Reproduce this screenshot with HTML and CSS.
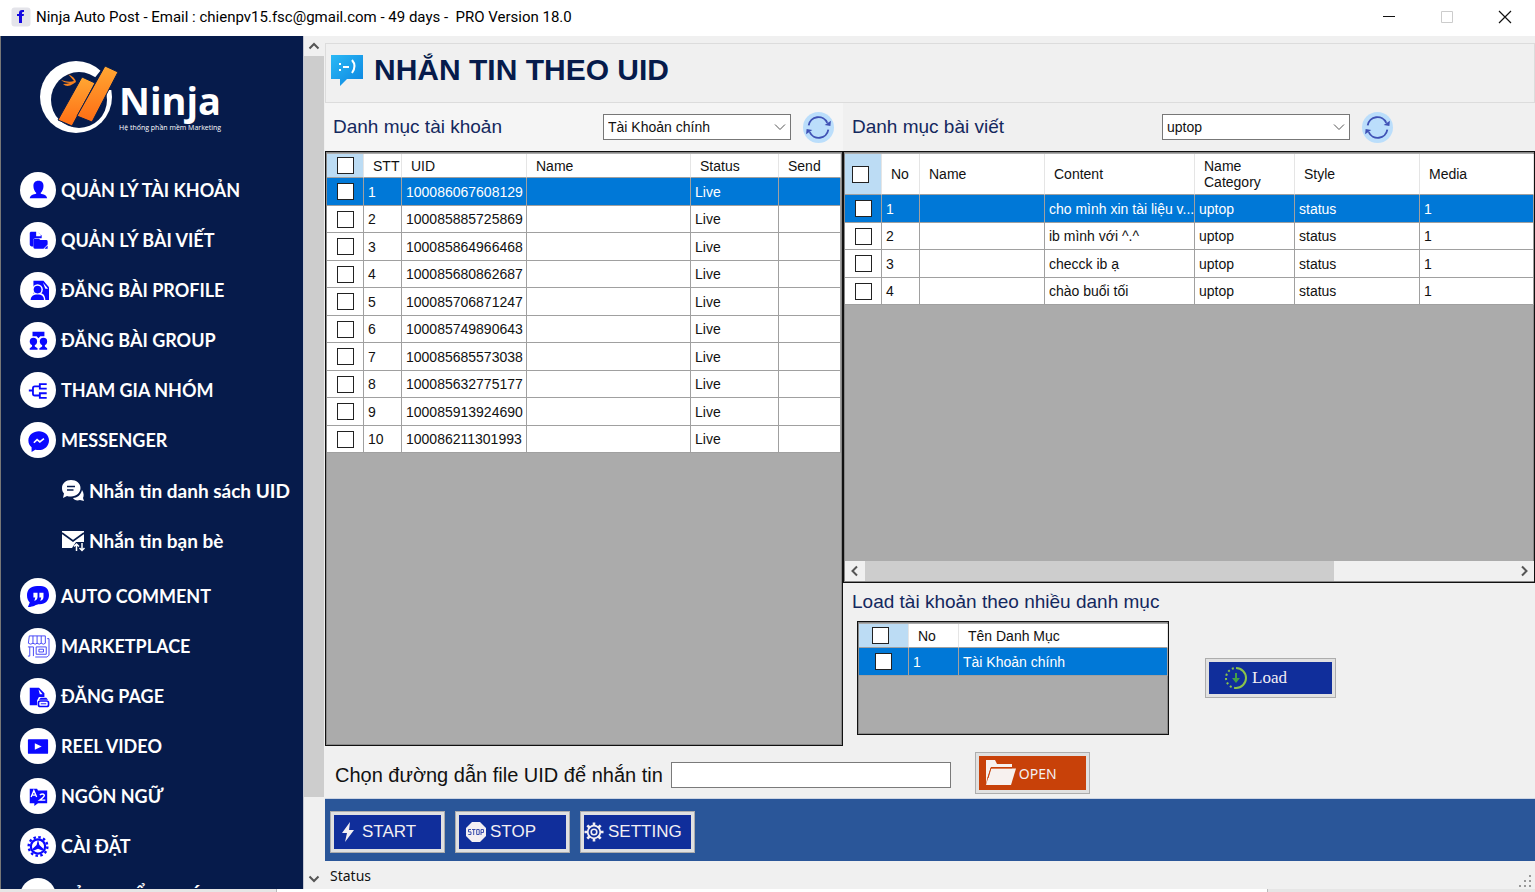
FILE: index.html
```html
<!DOCTYPE html>
<html lang="vi">
<head>
<meta charset="utf-8">
<title>Ninja Auto Post</title>
<link rel="stylesheet" href="styles.css">
</head>
<body>
<div class="window">
  <header class="titlebar">
    <svg class="app-icon" viewBox="0 0 20 20" aria-hidden="true"><rect x=".5" y=".5" width="19" height="19" rx="3" fill="#e4e4ea"/><path d="M8 16V9H6V7h2V6q0-3 3-3h2v2h-1q-1 0-1 1v1h2l-.4 2H11v7z" fill="#1508e0"/></svg>
    <span class="titlebar-text">Ninja Auto Post - Email : chienpv15.fsc@gmail.com - 49 days -&nbsp; PRO Version 18.0</span>
    <div class="window-controls">
      <button aria-label="Minimize"><svg viewBox="0 0 14 14"><path d="M1 6.500h12" stroke="#111" fill="none"/></svg></button>
      <button aria-label="Maximize" disabled><svg viewBox="0 0 14 14"><path d="M1.500 1.500h11v11h-11z" stroke="#ccc" fill="none"/></svg></button>
      <button aria-label="Close"><svg viewBox="0 0 14 14"><path d="M1 1l12 12M13 1L1 13" stroke="#111" stroke-width="1.200" fill="none"/></svg></button>
    </div>
  </header>

  <div class="body">
    <aside class="sidebar">
      <div class="logo">
        <svg class="logo-mark" viewBox="0 0 80 74" aria-hidden="true">
          <defs><linearGradient id="flame" x1="0" y1="0" x2="0" y2="1"><stop offset="0" stop-color="#ffa733"/><stop offset="1" stop-color="#ff6d14"/></linearGradient></defs>
          <circle cx="37" cy="37" r="36" fill="#fff"/>
          <ellipse cx="40" cy="40" rx="28" ry="28" fill="#061b4b"/>
          <path d="M62 10L67 3 82 13 73 30 66 30 54 20z" fill="#061b4b"/>
          <path d="M43 17L56 23 33 66 19 60Z" fill="url(#flame)" stroke="#061b4b"/>
          <path d="M66 6L79 12 53 62 38 56Z" fill="url(#flame)" stroke="#061b4b"/>
          <path d="M22 20q8 3 13 1l-6-7q7 3 8 8l-3 2q-6 4-10 0 4 0 7-1-6 0-9-3z" fill="#f58220"/>
        </svg>
        <div class="logo-words"><span class="logo-name">Ninja</span><span class="logo-tag">Hệ thống phần mềm Marketing</span></div>
      </div>
      <nav class="menu">
        <a class="item" href="#"><span class="disc"><svg viewBox="0 0 24 24"><path d="M12.500 2c3.900 0 5.500 2.500 5.500 5.500 0 3.500-1.500 6-3 7.500V16c3 .6 6.500 1.500 7 5H3c.5-3.500 4-4.400 7-5v-1c-1.500-1.500-3-4-3-7.500C7 4.500 8.600 2 12.500 2z"/></svg></span>QUẢN LÝ TÀI KHOẢN</a>
        <a class="item" href="#"><span class="disc"><svg viewBox="0 0 24 24"><path d="M4 3h6v5h5V6l-4-3 5 4v3H9l-2 1v8H5q-2 0-2-2V4z"/><path d="M10 10.500h3l1.500 1.500H21q1.500 0 1.500 1.500V17L18 21.500H8.500Q7 21.500 7 20v-8q0-1.500 1.500-1.500z"/><path d="M22.500 18v3.500H19z"/></svg></span>QUẢN LÝ BÀI VIẾT</a>
        <a class="item" href="#"><span class="disc"><svg viewBox="0 0 24 24"><path d="M7 2h11l6 7v14H7z"/><path d="M17.500 4l5.500 6.500h-3z" fill="#fff"/><circle cx="11.500" cy="11.500" r="5.800" fill="#fff"/><path d="M2 24c0-6 4-9 10-9s8 3 8 9z" fill="#fff"/><circle cx="11.500" cy="11.500" r="4.200"/><path d="M4 23c0-4 3-6 7.500-6s7 2 7 6z"/></svg></span>ĐĂNG BÀI PROFILE</a>
        <a class="item" href="#"><span class="disc"><svg viewBox="0 0 24 24"><path d="M6 3h13v5h-4.500l-2 2-2-2H6z"/><circle cx="7" cy="13.500" r="4"/><circle cx="18" cy="13.500" r="4"/><path d="M5.500 15h3v4l3 2v1.500H3V21l2.500-2zM16.500 15h3v4l2.500 2v1.500h-8.500V21l3-2z"/></svg></span>ĐĂNG BÀI GROUP</a>
        <a class="item" href="#"><span class="disc"><svg viewBox="0 0 24 24" class="lined"><path d="M2 12.500h4M14 8H8.500a2 2 0 0 0-2 2v6a2 2 0 0 0 2 2H14M21.500 5.500H14v5h7.500M21.500 15.500H14v5h7.500"/></svg></span>THAM GIA NHÓM</a>
        <a class="item" href="#"><span class="disc"><svg viewBox="0 0 24 24"><path d="M13 2.500c6 0 11 4 11 10S19 23 13 23c-2 0-3-.5-4-.5L5 25v-5c-2-2-3.500-4-3.500-7.500C1.500 6.500 7 2.500 13 2.500z"/><path d="M7.500 15l3.500-3.500 3 2.500 4.500-3.500" stroke="#fff" stroke-width="1.800" fill="none"/></svg></span>MESSENGER</a>
        <div class="submenu">
          <a class="item" href="#"><svg class="sub-icon" viewBox="0 0 24 24" aria-hidden="true"><path d="M10 2c5.500 0 9.500 3.500 9.500 8s-4 8.500-9.500 8.500c-1.500 0-3 0-4-.5L2 20l1-4.500C1.500 14 1 12 1 10c0-4.500 4-8 9-8z" fill="#fff"/><path d="M6 8.500h8M6 12h6.500" stroke="#061b4b" stroke-width="1.600"/><path d="M21 12c2 3 2 6 1 8l1 3-4-1c-3 1-6 0-7-2 4 0 8-3 9-8z" fill="#fff"/></svg>Nhắn tin danh sách UID</a>
          <a class="item" href="#"><svg class="sub-icon" viewBox="0 0 24 24" aria-hidden="true"><path d="M1 3h22v11h-8l-4 6H1z" fill="#fff"/><path d="M1 5l11 8 11-8" fill="none" stroke="#061b4b" stroke-width="1.600"/><path d="M15.500 23v-7M13 18.500l2.500-2.500 2.500 2.500M21 15v7M18.500 20l2.500 2.500 2.500-2.500" fill="none" stroke="#fff" stroke-width="1.500"/></svg>Nhắn tin bạn bè</a>
        </div>
        <a class="item" href="#"><span class="disc"><svg viewBox="0 0 24 24"><path d="M11 1h4c6 0 9 4 9 10s-4 10-10 10c-5 0-6 3-13 3l2-5C1 17 0 15 0 11 0 5 4 1 11 1z"/><path d="M7 8.500h4.500V13q0 3-3.500 4.500l1-4H7zM13.500 8.500H18V13q0 3-3.500 4.500l1-4h-2z" fill="#fff"/></svg></span>AUTO COMMENT</a>
        <a class="item" href="#"><span class="disc"><svg viewBox="0 0 24 24" class="thin"><path d="M2.500 1H20v8q-2 2-4.500 0-2 2-4.500 0-2 2-4.500 0Q4 11 1.500 9zM6.500 1v8M11 1v8M15.500 1v8M1 13h6v10M3 13v10H1M10 13h11v8H10zM13 15.500h5v3h-5zM22 4h2v18l-2 2H9"/></svg></span>MARKETPLACE</a>
        <a class="item" href="#"><span class="disc"><svg viewBox="0 0 24 24"><path d="M3 3h10l6 6v4h-6l-2 4v5H3z"/><path d="M12.500 4.500l4.500 5.500h-3z" fill="#fff"/><path d="M15 14h6l2 2H13z"/><rect x="12.500" y="17.500" width="11" height="6" rx="2" fill="#fff" stroke="#0a09ff" stroke-width="1.800"/><path d="M15 20.500h6" stroke="#0a09ff"/></svg></span>ĐĂNG PAGE</a>
        <a class="item" href="#"><span class="disc"><svg viewBox="0 0 24 24"><rect x="1" y="4.500" width="22" height="16" rx="1"/><path d="M8.500 9l7.500 3.500-7.500 3.500z" fill="#fff"/></svg></span>REEL VIDEO</a>
        <a class="item" href="#"><span class="disc"><svg viewBox="0 0 24 24"><path d="M3 4h8l1 2h10v14H12l-4 3v-3H3z"/><path d="M4.500 13l3-7 3 7M5.500 11h4M14 11q3-2.500 5 0 0 2-5 5.500h6" stroke="#fff" stroke-width="1.500" fill="none"/></svg></span>NGÔN NGỮ</a>
        <a class="item" href="#"><span class="disc"><svg viewBox="0 0 24 24"><circle cx="12" cy="12.500" r="10.200" fill="none" stroke="#0a09ff" stroke-width="2.600" stroke-dasharray="2.700 2.641"/><circle cx="12" cy="12.500" r="7.800" fill="none" stroke="#0a09ff" stroke-width="2.400"/><path d="M12 5l1.500 6 5 4.500-2 1.500-4.500-2-4.500 2-2-1.500 5-4.500z"/></svg></span>CÀI ĐẶT</a>
        <a class="item" href="#"><span class="disc"></span>BẢNG KIỂM TOÁN</a>
      </nav>
    </aside>

    <div class="vscroll" aria-hidden="true">
      <span class="arrow"><svg viewBox="0 0 12 12"><path d="M1.500 8.500L6 4l4.500 4.500"/></svg></span>
      <span class="thumb"></span><span class="rest"></span>
      <span class="arrow"><svg viewBox="0 0 12 12"><path d="M1.500 3.500L6 8l4.500-4.500"/></svg></span>
    </div>

    <main class="main">
      <div class="page-head">
        <svg class="page-icon" viewBox="0 0 32 32" aria-hidden="true"><defs><linearGradient id="sky" x1="0" y1="0" x2="1" y2="1"><stop offset="0" stop-color="#2bb9f5"/><stop offset="1" stop-color="#0b84e0"/></linearGradient></defs><path d="M0 1h32v24H16l-7 7v-7H0z" fill="url(#sky)"/><path d="M8 9h2v2H8zM8 15h2v2H8zM12 12h6v2h-6z" fill="#fff"/><path d="M21 6q5 6 0 13" fill="none" stroke="#fff" stroke-width="2"/></svg>
        <h1>NHẮN TIN THEO UID</h1>
      </div>

      <div class="panels">
        <section class="panel accounts">
          <div class="filter">
            <label for="acc">Danh mục tài khoản</label>
            <span class="combo"><select id="acc"><option>Tài Khoản chính</option></select><svg viewBox="0 0 12 12"><path d="M1 3.500l5 5 5-5"/></svg></span>
            <button class="refresh" aria-label="Tải lại tài khoản"><svg viewBox="0 0 30 30"><circle cx="15" cy="15" r="15" fill="#bbdefb"/><path d="M5.500 13a9.500 9.500 0 0 1 18-2.500M24.500 17a9.500 9.500 0 0 1-18 2.500" fill="none" stroke="#3f51b5" stroke-width="1.800"/><path d="M21 12.500l5.500 1 .5-5zM9 17.500l-5.500-1-.5 5z" fill="#3f51b5"/></svg></button>
          </div>
          <div class="gridbox">
            <table class="grid">
              <colgroup><col class="c-check"><col class="c-no"><col class="c-wide"><col><col class="c-status"><col class="c-send"></colgroup>
              <thead><tr><th class="pick"><input type="checkbox" aria-label="Chọn tất cả"></th><th>STT</th><th>UID</th><th>Name</th><th>Status</th><th>Send</th></tr></thead>
              <tbody>
                <tr class="on"><td class="pick"><input type="checkbox" aria-label="1"></td><td>1</td><td>100086067608129</td><td></td><td>Live</td><td></td></tr>
                <tr><td class="pick"><input type="checkbox" aria-label="2"></td><td>2</td><td>100085885725869</td><td></td><td>Live</td><td></td></tr>
                <tr><td class="pick"><input type="checkbox" aria-label="3"></td><td>3</td><td>100085864966468</td><td></td><td>Live</td><td></td></tr>
                <tr><td class="pick"><input type="checkbox" aria-label="4"></td><td>4</td><td>100085680862687</td><td></td><td>Live</td><td></td></tr>
                <tr><td class="pick"><input type="checkbox" aria-label="5"></td><td>5</td><td>100085706871247</td><td></td><td>Live</td><td></td></tr>
                <tr><td class="pick"><input type="checkbox" aria-label="6"></td><td>6</td><td>100085749890643</td><td></td><td>Live</td><td></td></tr>
                <tr><td class="pick"><input type="checkbox" aria-label="7"></td><td>7</td><td>100085685573038</td><td></td><td>Live</td><td></td></tr>
                <tr><td class="pick"><input type="checkbox" aria-label="8"></td><td>8</td><td>100085632775177</td><td></td><td>Live</td><td></td></tr>
                <tr><td class="pick"><input type="checkbox" aria-label="9"></td><td>9</td><td>100085913924690</td><td></td><td>Live</td><td></td></tr>
                <tr><td class="pick"><input type="checkbox" aria-label="10"></td><td>10</td><td>100086211301993</td><td></td><td>Live</td><td></td></tr>
              </tbody>
            </table>
          </div>
        </section>

        <section class="panel posts">
          <div class="filter">
            <label for="post">Danh mục bài viết</label>
            <span class="combo"><select id="post"><option>uptop</option></select><svg viewBox="0 0 12 12"><path d="M1 3.500l5 5 5-5"/></svg></span>
            <button class="refresh" aria-label="Tải lại bài viết"><svg viewBox="0 0 30 30"><circle cx="15" cy="15" r="15" fill="#bbdefb"/><path d="M5.500 13a9.500 9.500 0 0 1 18-2.500M24.500 17a9.500 9.500 0 0 1-18 2.500" fill="none" stroke="#3f51b5" stroke-width="1.800"/><path d="M21 12.500l5.500 1 .5-5zM9 17.500l-5.500-1-.5 5z" fill="#3f51b5"/></svg></button>
          </div>
          <div class="gridbox">
            <table class="grid tall">
              <colgroup><col class="c-check"><col class="c-no"><col class="c-wide"><col class="c-content"><col class="c-cat"><col class="c-wide"><col></colgroup>
              <thead><tr><th class="pick lead"><input type="checkbox" aria-label="Chọn tất cả bài viết"></th><th>No</th><th>Name</th><th>Content</th><th>Name Category</th><th>Style</th><th>Media</th></tr></thead>
              <tbody>
                <tr class="on"><td class="pick"><input type="checkbox" aria-label="1"></td><td>1</td><td></td><td>cho mình xin tài liệu v...</td><td>uptop</td><td>status</td><td>1</td></tr>
                <tr><td class="pick"><input type="checkbox" aria-label="2"></td><td>2</td><td></td><td>ib mình với ^.^</td><td>uptop</td><td>status</td><td>1</td></tr>
                <tr><td class="pick"><input type="checkbox" aria-label="3"></td><td>3</td><td></td><td>checck ib ạ</td><td>uptop</td><td>status</td><td>1</td></tr>
                <tr><td class="pick"><input type="checkbox" aria-label="4"></td><td>4</td><td></td><td>chào buổi tối</td><td>uptop</td><td>status</td><td>1</td></tr>
              </tbody>
            </table>
            <div class="hscroll" aria-hidden="true">
              <span class="arrow"><svg viewBox="0 0 12 12"><path d="M8 1.500L3.500 6 8 10.500"/></svg></span>
              <span class="thumb"></span><span class="rest"></span>
              <span class="arrow"><svg viewBox="0 0 12 12"><path d="M4 1.500L8.500 6 4 10.500"/></svg></span>
            </div>
          </div>
          <div class="loader">
            <h2>Load tài khoản theo nhiều danh mục</h2>
            <div class="loader-row">
              <div class="gridbox small">
                <table class="grid">
                  <colgroup><col class="c-half"><col class="c-half"><col></colgroup>
                  <thead><tr><th class="pick lead"><input type="checkbox" aria-label="Chọn tất cả danh mục"></th><th>No</th><th>Tên Danh Mục</th></tr></thead>
                  <tbody><tr class="on"><td class="pick"><input type="checkbox" aria-label="1"></td><td>1</td><td>Tài Khoản chính</td></tr></tbody>
                </table>
              </div>
              <button class="btn load"><svg viewBox="0 0 24 24" aria-hidden="true"><path d="M12 2a10 10 0 0 1 0 20" fill="none" stroke="#8bc34a" stroke-width="2"/><path d="M12 22A10 10 0 0 1 12 2" fill="none" stroke="#8bc34a" stroke-width="2" stroke-dasharray="2 2.500"/><path d="M11 7h2v5h3l-4 5-4-5h3z" fill="#43a047"/></svg>Load</button>
            </div>
          </div>
        </section>
      </div>

      <div class="file-row">
        <label for="path">Chọn đường dẫn file UID để nhắn tin</label>
        <input id="path" type="text">
        <button class="btn open"><svg viewBox="0 0 30 26" aria-hidden="true"><path d="M0 0h9l2 4h15v3H5L1 19l-1 6z" fill="#f7f1ef"/><path d="M5 8.500h25L25 25H0z" fill="#f7f1ef"/><path d="M2 18L5 7.800h21" fill="none" stroke="#c84109"/></svg>OPEN</button>
      </div>

      <div class="actions">
        <button class="btn start"><svg viewBox="0 0 20 20" aria-hidden="true"><path d="M12 0L4 11h5l-2 9 9-12h-5z" fill="#f3eff3"/></svg>START</button>
        <button class="btn stop"><svg viewBox="0 0 20 20" aria-hidden="true"><path d="M6 0h8l6 6v8l-6 6H6l-6-6V6z" fill="#f3eff3"/><path d="M5 7.500H2.500v2.400H5v2.600H2.300M6 7.500h3.500M7.700 7.500v5.500M10.700 7.500h2.500v5h-2.500zM15 13V7.500h2.500v3H15" fill="none" stroke="#3c4fae"/></svg>STOP</button>
        <button class="btn setting"><svg viewBox="0 0 20 20" aria-hidden="true"><g fill="none" stroke="#f3eff3"><circle cx="10" cy="10" r="6.300" stroke-width="1.800"/><circle cx="10" cy="10" r="2.800" stroke-width="1.600"/><path d="M10 .5v3M10 16.500v3M.5 10h3M16.500 10h3M3.300 3.300l2.200 2.200M14.500 14.500l2.200 2.200M3.300 16.700l2.200-2.200M14.500 5.500l2.200-2.200" stroke-width="2.600"/></g></svg>SETTING</button>
      </div>

      <footer class="status"><span>Status</span><svg viewBox="0 0 14 14" aria-hidden="true"><path d="M10 0h2v2h-2zM5 5h2v2H5zM10 5h2v2h-2zM0 10h2v2H0zM5 10h2v2H5zM10 10h2v2h-2z" fill="#999"/></svg></footer>
    </main>
  </div>
  <div class="desk-edge"><span class="edge-left"></span><span class="edge-right"></span></div>
</div>
</body>
</html>
```
FILE: styles.css
```css
* { box-sizing: border-box; }
body { margin: 0; font-family: "Liberation Sans", Arial, sans-serif; font-size: 14px; color: #111; }
button { font: inherit; cursor: pointer; }
.window { height: 100vh; display: flex; flex-direction: column; overflow: hidden; background: #f0f0f0; }

.titlebar { flex: none; height: 36px; display: flex; align-items: center; background: #fff; padding: 0 1px 3px 11px; font-family: Roboto, sans-serif; font-size: 15px; }
.app-icon { width: 20px; height: 20px; margin-right: 5px; }
.titlebar-text { flex: 1; color: #000; }
.window-controls { display: flex; }
.window-controls button { width: 58px; height: 33px; border: 0; padding: 0; background: none; display: grid; place-items: center; }
.window-controls svg { width: 14px; height: 14px; }

.body { flex: 1; min-height: 0; display: flex; }

.sidebar { flex: none; width: 304px; overflow: hidden; background: #061b4b; border-left: 1px solid #777; border-right: 1px solid #c5c8d2; }
.logo { height: 129px; padding: 24px 0 0 38px; display: flex; align-items: flex-start; }
.logo-mark { width: 80px; height: 74px; flex: none; }
.logo-words { display: flex; flex-direction: column; color: #fff; padding-top: 16px; white-space: nowrap; }
.logo-name { font: bold 38px/48px "Open Sans", sans-serif; }
.logo-tag { font: 7px/8px "Open Sans", sans-serif; }
.item { height: 50px; display: flex; align-items: center; gap: 5px; padding-left: 19px; color: #fff; text-decoration: none; font-family: Lato, "Noto Sans", sans-serif; font-weight: bold; font-size: 18px; white-space: nowrap; }
.disc { flex: none; width: 36px; height: 36px; border-radius: 50%; background: #fff; display: grid; place-items: center; }
.disc svg { width: 22px; height: 22px; fill: #0a09ff; overflow: visible; }
.disc .lined, .disc .thin { fill: none; stroke: #0a09ff; stroke-width: 2; }
.disc .thin { stroke: #3b3bf5; stroke-width: 1; }
.submenu { margin-bottom: 6px; }
.submenu .item { padding-left: 60px; gap: 4px; font-size: 19px; }
.sub-icon { flex: none; width: 24px; height: 24px; }

.vscroll { flex: none; width: 20px; display: flex; flex-direction: column; background: #f0f0f0; }
.arrow { flex: none; width: 20px; height: 20px; display: grid; place-items: center; }
.arrow svg { width: 12px; height: 12px; fill: none; stroke: #555; stroke-width: 2; }
.thumb { flex: 740; background: #cdcdcd; }
.rest { flex: 72; }

.main { flex: 1; min-width: 0; display: flex; flex-direction: column; }
.page-head { height: 60px; margin: 7px 0 0 1px; padding: 0 0 6px 5px; border: 1px solid #dcdcdc; display: flex; align-items: center; gap: 11px; }
.page-icon { width: 32px; height: 32px; }
h1 { margin: 0; font-size: 30px; line-height: 36px; color: #061b4b; }

.panels { flex: 1; min-height: 0; display: grid; grid-template-columns: 518fr 692fr; margin-left: 1px; }
.panel { min-width: 0; min-height: 0; display: flex; flex-direction: column; }
.filter { flex: none; height: 48px; display: flex; align-items: center; gap: 12px; padding: 0 9px 0 8px; }
.accounts .filter { background: #f5f5f5; }
.posts .filter { padding: 0 142px 0 9px; }
.filter label { flex: 1; font-size: 19px; color: #14285e; white-space: nowrap; }
.combo { position: relative; width: 188px; height: 26px; }
.combo select { appearance: none; width: 100%; height: 100%; border: 1px solid #777; border-radius: 0; background: #fff; padding: 0 4px; font: inherit; color: #111; }
.combo svg { position: absolute; right: 5px; top: 7px; width: 12px; height: 12px; fill: none; stroke: #555; pointer-events: none; }
.refresh { width: 31px; height: 31px; border: 0; padding: 0; background: none; }
.refresh svg { display: block; width: 31px; height: 31px; }

.gridbox { flex: 1; min-height: 0; border: 1px solid #111; box-shadow: inset 0 0 0 1px #888; padding: 2px 1px 1px; background: #ababab; display: flex; flex-direction: column; }
.posts .gridbox { padding-right: 0; }
.grid { width: 100%; table-layout: fixed; border-collapse: separate; border-spacing: 0; background: #fff; }
.grid th, .grid td { padding: 0 0 0 4px; text-align: left; font-weight: normal; white-space: nowrap; border-right: 1px solid #a0a0a0; border-bottom: 1px solid #a0a0a0; overflow: hidden; }
.grid th { height: 24px; padding-left: 9px; border-right-color: #e5e5e5; line-height: 16px; }
.tall th { height: 41px; white-space: normal; }
.grid td { height: 27px; }
.grid tr:nth-child(odd) td { height: 28px; }
.grid .pick { padding: 0; text-align: center; line-height: 0; }
.grid th.pick { background: #bcdcf4; }
.grid th.lead { padding-right: 6px; }
.on td { background: #0078d7; color: #fff; }
.grid input { appearance: none; width: 17px; height: 17px; margin: 0; border: 1px solid #222; background: #fff; vertical-align: middle; }
.c-check { width: 37px; }
.c-no { width: 38px; }
.c-wide { width: 125px; }
.c-status { width: 88px; }
.c-send { width: 62px; }
.c-content { width: 150px; }
.c-cat { width: 100px; }
.c-half { width: 50px; }

.hscroll { height: 20px; margin-top: auto; display: flex; background: #f0f0f0; }
.hscroll .thumb { flex: 469; }
.hscroll .rest { flex: 180; }

.loader { flex: none; height: 163px; padding: 7px 0 0 9px; }
h2 { margin: 0 0 7px; font-size: 19px; line-height: 24px; font-weight: normal; color: #14285e; }
.loader-row { display: flex; align-items: center; gap: 36px; padding-left: 5px; }
.gridbox.small { flex: none; width: 312px; height: 114px; }

.btn { display: flex; align-items: center; height: 40px; border: 4px solid #e1e1e1; outline: 1px solid #adadad; outline-offset: -1px; background: #102e9b; color: #f3eff3; white-space: nowrap; }
.btn svg { flex: none; }
.load { width: 131px; padding: 0 0 0 15px; gap: 4px; font-family: "Liberation Serif", serif; font-size: 17px; }
.load svg { width: 24px; height: 24px; }
.open { width: 115px; height: 42px; padding: 0 0 0 7px; gap: 3px; background: #c84109; font-family: "Noto Sans", sans-serif; }
.open svg { width: 30px; height: 26px; }

.file-row { flex: none; height: 52px; display: flex; align-items: center; padding: 2px 0 0 11px; }
.file-row label { font-size: 20px; margin-right: 8px; padding-top: 4px; white-space: nowrap; }
.file-row input { width: 280px; height: 26px; margin: 4px 24px 0 0; border: 1px solid #7a7a7a; background: #fff; padding: 0 4px; font: inherit; }

.actions { flex: none; height: 63px; display: flex; align-items: center; gap: 10px; padding: 4px 0 0 5px; margin-left: 1px; background: #2a5699; border-top: 1px solid #cdd5e3; }
.actions .btn { width: 115px; height: 42px; padding: 0; font-size: 17px; gap: 4px; }
.actions svg { width: 20px; height: 20px; }
.actions .start { padding-left: 4px; }
.actions .stop { padding-left: 7px; }
.status { flex: none; height: 28px; display: flex; align-items: center; justify-content: space-between; padding: 0 2px 0 6px; font-family: "Noto Sans", sans-serif; }
.status svg { width: 14px; height: 14px; align-self: flex-end; }

.desk-edge { flex: none; height: 3px; display: flex; justify-content: space-between; background: #fff; }
.edge-left { width: 277px; background: #e6e6e6; border-right: 1px solid #bbb; }
.edge-right { width: 268px; background: #e6e6e6; border-left: 1px solid #bbb; }
```
